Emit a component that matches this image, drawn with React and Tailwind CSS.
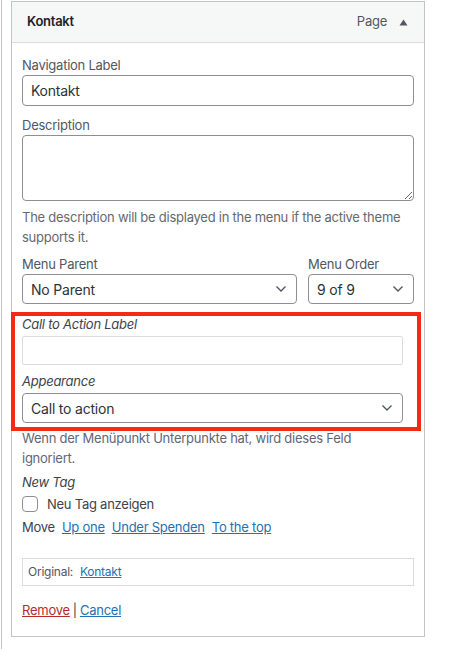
import React from "react";

const font = { fontFamily: "Inter, 'Noto Sans', sans-serif" };

const Chevron = () => (
  <svg width="12" height="8" viewBox="0 0 12 8" className="pointer-events-none absolute top-1/2 -translate-y-1/2 right-[10px]">
    <polyline points="1.5,1.5 6,6 10.5,1.5" fill="none" stroke="#50575e" strokeWidth="1.4" />
  </svg>
);

const Select = ({ value, className = "" }) => (
  <div className={`relative ${className}`}>
    <select
      defaultValue={value}
      className="h-[30px] w-full appearance-none rounded-[4px] border border-[#8c8f94] bg-white pl-[8px] pr-6 text-[14px] tracking-[-0.2px] text-[#2c3338] outline-none"
    >
      <option>{value}</option>
    </select>
    <Chevron />
  </div>
);

export default function App() {
  return (
    <div className="h-[649px] w-[470px] bg-white tracking-[-0.25px]" style={font}>
      <div className="ml-px h-full border-l border-[#c3c4c7] pl-[9px] pt-px">
        <div className="w-[414px] border border-[#c3c4c7]">
          {/* header */}
          <div className="flex h-[41px] items-center justify-between border-b border-[#dcdcde] bg-[#f6f7f7] pl-[15px] pr-[16px]">
            <span className="text-[13px] font-semibold text-[#1d2327]">Kontakt</span>
            <div className="flex items-center gap-[12px] text-[13px] text-[#50575e]">
              <span>Page</span>
              <svg width="9" height="7" viewBox="0 0 9 7">
                <polygon points="4.5,0.5 8.5,6.5 0.5,6.5" fill="#50575e" />
              </svg>
            </div>
          </div>

          {/* body */}
          <div className="px-[10px] pt-[13px] pb-[16px] text-[13px] text-[#3c434a]">
            <label className="block leading-[18px] text-[#50575e]">Navigation Label</label>
            <input
              defaultValue="Kontakt"
              className="mt-px block h-[31px] w-full rounded-[4px] border border-[#8c8f94] px-[8px] text-[14px] text-[#2c3338] outline-none"
            />

            <label className="mt-[10px] block leading-[18px] text-[#50575e]">Description</label>
            <textarea
              className="mt-px block h-[66px] w-full rounded-[4px] border border-[#8c8f94] px-[8px] text-[14px] outline-none"
            />
            <p className="mt-[6px] leading-[20px] text-[#646970]">
              The description will be displayed in the menu if the active theme supports it.
            </p>

            <div className="mt-[8px] flex gap-[11px]">
              <div className="w-[275px]">
                <label className="block leading-[18px] text-[#50575e]">Menu Parent</label>
                <Select value="No Parent" className="mt-px" />
              </div>
              <div className="flex-1">
                <label className="block leading-[18px] text-[#50575e]">Menu Order</label>
                <Select value="9 of 9" className="mt-px" />
              </div>
            </div>

            {/* call to action fields (annotated) */}
            <div className="relative mt-[8px] w-[381px] pt-[3px] pb-[8px]">
              <div className="pointer-events-none absolute -left-[11px] -right-[18px] top-0 bottom-0 border-4 border-[#f62a14]" />
              <label className="block italic leading-[18px]">Call to Action Label</label>
              <input className="mt-[3px] block h-[29px] w-full rounded-[2px] border border-[#dcdcde] outline-none" />
              <label className="mt-[7px] block italic leading-[18px]">Appearance</label>
              <Select value="Call to action" className="mt-[3px]" />
            </div>

            <p className="mt-[-3px] w-[360px] leading-[20px] text-[#5f6677]">
              Wenn der Menüpunkt Unterpunkte hat, wird dieses Feld ignoriert.
            </p>

            <p className="mt-[4px] italic leading-[20px]">New Tag</p>
            <label className="mt-[3px] flex items-center gap-[9px] leading-[18px]">
              <span className="inline-block h-[16px] w-[16px] rounded-[4px] border border-[#8c8f94] bg-white" />
              <span>Neu Tag anzeigen</span>
            </label>

            <div className="mt-[4px] flex items-center gap-[7px] leading-[20px]">
              <span>Move</span>
              <a href="#" className="text-[#2271b1] underline">Up one</a>
              <a href="#" className="text-[#2271b1] underline">Under Spenden</a>
              <a href="#" className="text-[#2271b1] underline">To the top</a>
            </div>

            <div className="mt-[21px] flex h-[28px] items-center gap-[7px] border border-[#dcdcde] px-[5px] text-[12px]">
              <span className="text-[#50575e]">Original:</span>
              <a href="#" className="text-[#2271b1] underline">Kontakt</a>
            </div>

            <div className="mt-[14px] leading-[20px]">
              <a href="#" className="text-[#b32d2e] underline">Remove</a>
              <span className="px-[3px]">|</span>
              <a href="#" className="text-[#2271b1] underline">Cancel</a>
            </div>
          </div>
        </div>
      </div>
    </div>
  );
}
